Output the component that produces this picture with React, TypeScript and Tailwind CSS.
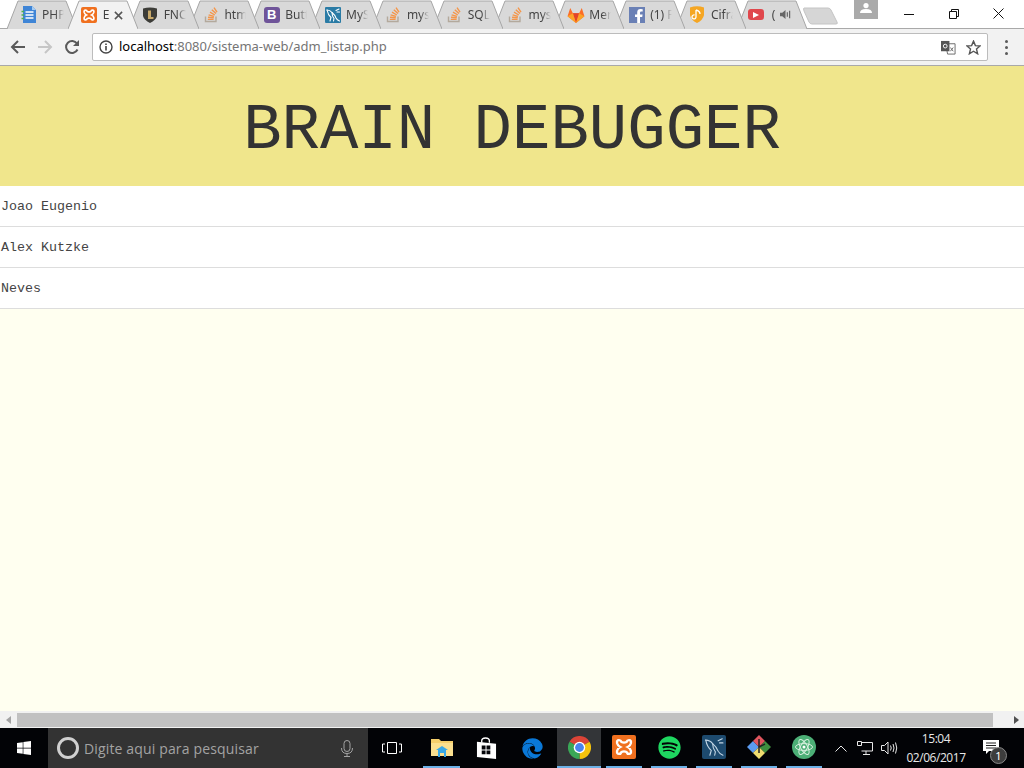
import React from "react";
import { FaSpotify, FaEdge, FaWindows } from "react-icons/fa";

const So = () => (
  <svg viewBox="0 0 16 17" className="w-4 h-[17px]">
    <path d="M2.5 10.5 V15.5 H13 V10.5" stroke="#b3a99c" strokeWidth="1.4" fill="none" />
    <path d="M4.8 13.4 H10.6 M5 11.2 L10.8 11.8 M5.6 8.8 L11 10.4 M7 6.2 L11.8 9 M8.8 3.8 L13 7.6 M11 1.6 L14 6.2" stroke="#f4964a" strokeWidth="1.4" />
  </svg>
);
const Xampp = ({ big }: { big?: boolean }) => (
  <span className={`flex items-center justify-center bg-[#f0701f] ${big ? "w-6 h-6 rounded-[2px]" : "w-4 h-4 rounded-[2px]"}`}>
    <svg viewBox="0 0 16 16" className={big ? "w-5 h-5" : "w-[14px] h-[14px]"}>
      <path d="M4 2.5 Q5.5 2.5 6 4 Q8 5 10 4 Q10.5 2.5 12 2.5 Q14 2.5 13.5 5 Q13 7 11 8 Q13 9 13.5 11 Q14 13.5 12 13.5 Q10.5 13.5 10 12 Q8 11 6 12 Q5.5 13.5 4 13.5 Q2 13.5 2.5 11 Q3 9 5 8 Q3 7 2.5 5 Q2 2.5 4 2.5Z" fill="none" stroke="#fff" strokeWidth="1.9" />
    </svg>
  </span>
);
const Gitlab = () => (
  <svg viewBox="0 0 20 18" className="w-[18px] h-4 shrink-0">
    <path d="M10 18 L0.5 10.5 L3.5 1 L6.5 7 H13.5 L16.5 1 L19.5 10.5Z" fill="#fc6d26" />
    <path d="M10 18 L6.5 7 H13.5Z" fill="#e24329" />
    <path d="M10 18 L0.5 10.5 L6.5 7Z" fill="#fca326" />
    <path d="M10 18 L19.5 10.5 L13.5 7Z" fill="#fca326" />
  </svg>
);
const Shield = () => (
  <svg viewBox="0 0 16 16" className="w-4 h-4">
    <path d="M1 1.5 Q8 -.5 15 1.5 V9 Q14 13 8 16 Q2 13 1 9Z" fill="#3d3d38" />
    <path d="M6 3.5 H9 V10 H11.5 V12 H6Z" fill="#c8a96a" />
  </svg>
);
const Doc = () => (
  <svg viewBox="0 0 16 17" className="w-4 h-[17px]">
    <path d="M2 0 H11 L15 4 V17 H2Z" fill="#3f85d6" />
    <path d="M11 0 L15 4 H11Z" fill="#a8cdf3" />
    <path d="M4.5 6 H12.5 M4.5 9 H12.5 M4.5 12 H12.5" stroke="#fff" strokeWidth="1.3" />
    <path d="M.5 5.5 H3 M.5 9 H3 M.5 12.5 H3" stroke="#4caf50" strokeWidth="1.6" />
  </svg>
);
const Boot = () => (
  <span className="w-4 h-4 rounded-[3px] bg-[#6f5499] text-white flex items-center justify-center text-[13px] leading-none font-bold font-['Liberation_Sans',sans-serif]">B</span>
);
const DolphinPath = ({ color, w }: { color: string; w: number }) => (
  <g fill="none" stroke={color} strokeWidth={w} strokeLinecap="round">
    <path d="M2 3 Q5 3 7 5.5 Q10 8 11 11 Q12 13 14.5 14" />
    <path d="M2 3 Q3 8 6 10.5 L5 14" />
    <path d="M7 5.5 Q7 9 9 11.5 L8.5 14" />
    <path d="M11 3.5 L14 2 M12 5 L14.5 5" />
  </g>
);
const Dolphin = () => (
  <span className="w-4 h-4 bg-[#2a7ba5] flex items-center justify-center rounded-[1px]">
    <svg viewBox="0 0 16 16" className="w-4 h-4"><DolphinPath color="#fff" w={1.1} /></svg>
  </span>
);
const Fb = () => (
  <svg viewBox="0 0 16 16" className="w-4 h-4">
    <rect width="16" height="16" fill="#6a80b5" />
    <path d="M11 16 V10 H13.2 L13.6 7.4 H11 V5.8 Q11 4.6 12.2 4.6 H13.7 V2.3 Q12.6 2.1 11.6 2.1 Q8.2 2.1 8.2 5.5 V7.4 H6 V10 H8.2 V16Z" fill="#fff" />
  </svg>
);
const Cifra = () => (
  <svg viewBox="0 0 16 17" className="w-4 h-[17px]">
    <path d="M1 1.5 Q8 -1 15 1.5 V9 Q14 14 8 17 Q2 14 1 9Z" fill="#f5a623" />
    <path d="M7 4 V11 A2 2 0 1 1 5.5 9 M7 4 Q11 5 11 8" stroke="#fff" strokeWidth="1.3" fill="none" />
  </svg>
);
const Yt = () => (
  <span className="w-[16px] h-[11px] bg-[#e0474c] rounded-[3px] flex items-center justify-center -translate-x-[2px]">
    <svg viewBox="0 0 6 6" className="w-[6px] h-[6px]"><path d="M0 0 L6 3 L0 6Z" fill="#fff" /></svg>
  </span>
);
const Speaker = ({ color }: { color: string }) => (
  <svg viewBox="0 0 12 12" className="w-[11px] h-[11px]">
    <path d="M0 4 H2.5 L6 1 V11 L2.5 8 H0Z" fill={color} />
    <path d="M8 3.5 V8.5 M10.5 2 V10" stroke={color} strokeWidth="1.3" />
  </svg>
);

const tabs: { t: string; icon: React.ReactNode; active?: boolean }[] = [
  { t: "PHP", icon: <Doc /> },
  { t: "E", icon: <Xampp />, active: true },
  { t: "FNC", icon: <Shield /> },
  { t: "htm", icon: <So /> },
  { t: "Butt", icon: <Boot /> },
  { t: "MyS", icon: <Dolphin /> },
  { t: "mys", icon: <So /> },
  { t: "SQL", icon: <So /> },
  { t: "mys", icon: <So /> },
  { t: "Mer", icon: <Gitlab /> },
  { t: "(1) F", icon: <Fb /> },
  { t: "Cifra", icon: <Cifra /> },
  { t: "(", icon: <Yt /> },
];

function Tab({ t, icon, active, z, i }: { t: string; icon: React.ReactNode; active?: boolean; z: number; i: number }) {
  return (
    <div className={`relative w-[70px] h-[29px] shrink-0 flex items-center pl-[13px] ${i === 0 ? "" : "ml-[-9.2px]"}`} style={{ zIndex: z }}>
      <svg viewBox="0 0 70 29" className="absolute inset-0 w-[70px] h-[29px]">
        <path d="M0 29 L11 1 H59 L70 29Z" fill={active ? "#f2f2f2" : "#d9d9d9"} />
        <path d="M0 29 L11 1 H59 L70 29" fill="none" stroke="#a6a6a6" strokeWidth="1" />
      </svg>
      <span className="relative w-[17px] flex justify-center shrink-0">{icon}</span>
      <span className="relative ml-[5px] w-[22px] overflow-hidden whitespace-nowrap text-[12px] text-[#444] [mask-image:linear-gradient(to_right,black_60%,transparent)]">
        {t}
      </span>
      {active && (
        <svg viewBox="0 0 10 10" className="absolute left-[46px] top-[11px] w-[9px] h-[9px]">
          <path d="M1 1 L9 9 M9 1 L1 9" stroke="#555" strokeWidth="1.7" />
        </svg>
      )}
      {t === "(" && (
        <span className="absolute left-[43px] top-[9px]"><Speaker color="#666" /></span>
      )}
    </div>
  );
}

const Chrome = () => (
  <svg viewBox="0 0 24 24" className="w-[23px] h-[23px]">
    <path d="M12 12 L1.6 6 A12 12 0 0 1 22.4 6Z" fill="#db4437" />
    <path d="M12 12 L22.4 6 A12 12 0 0 1 12 24Z" fill="#f4c20d" />
    <path d="M12 12 L12 24 A12 12 0 0 1 1.6 6Z" fill="#3aa757" />
    <circle cx="12" cy="12" r="6" fill="#fff" />
    <circle cx="12" cy="12" r="4.6" fill="#4a84ee" />
  </svg>
);
const Explorer = () => (
  <svg viewBox="0 0 22 19" className="w-[22px] h-[19px]">
    <path d="M0 1 H8 L10 3 H22 V18 H0Z" fill="#f5cf6b" />
    <path d="M0 5 H22 V18 H0Z" fill="#fbe08f" />
    <path d="M7 12 H15 V19 H13 V15 H9 V19 H7Z" fill="#3aa9e6" />
    <path d="M5 12 L11 8 L17 12Z" fill="#3aa9e6" />
  </svg>
);
const Store = () => (
  <svg viewBox="0 0 22 23" className="w-[21px] h-[22px]">
    <path d="M6 6 V4 Q6 1 10 1 Q14 1 14 4 V6" stroke="#fff" strokeWidth="1.4" fill="none" />
    <path d="M1 5 L21 7 V23 L1 21Z" fill="#fff" />
    <path d="M6 9 H10 V13 H6Z M11 9 H15 V13 H11Z M6 14 H10 V18 H6Z M11 14 H15 V18 H11Z" fill="#05060a" />
  </svg>
);
const Workbench = () => (
  <span className="w-6 h-6 bg-[#1d4a6e] rounded-[2px] flex items-center justify-center">
    <svg viewBox="0 0 16 16" className="w-[22px] h-[22px]"><DolphinPath color="#c3d6e5" w={0.8} /></svg>
  </span>
);
const Kraken = () => (
  <svg viewBox="0 0 24 24" className="w-6 h-6">
    <path d="M0 12 L6 6 L12 12 L6 18Z" fill="#5b9bf0" />
    <path d="M12 12 L18 6 L24 12 L18 18Z" fill="#3f8f3f" />
    <path d="M6 6 L12 0 L18 6 L12 12Z" fill="#e0555e" />
    <path d="M6 18 L12 12 L18 18 L12 24Z" fill="#f0dd70" />
    <path d="M12 4 V18 M12 12 L18 9" stroke="#222" strokeWidth="1.5" />
  </svg>
);
const Atom = () => (
  <svg viewBox="0 0 24 24" className="w-6 h-6">
    <circle cx="12" cy="12" r="12" fill="#4caf76" />
    <g stroke="#d8f0df" strokeWidth="1" fill="none">
      <ellipse cx="12" cy="12" rx="8.5" ry="3.4" />
      <ellipse cx="12" cy="12" rx="8.5" ry="3.4" transform="rotate(60 12 12)" />
      <ellipse cx="12" cy="12" rx="8.5" ry="3.4" transform="rotate(120 12 12)" />
    </g>
    <circle cx="12" cy="12" r="1.5" fill="#fff" />
  </svg>
);

const bar: { icon: React.ReactNode; active?: boolean; open?: boolean; cls: string }[] = [
  { icon: <Explorer />, open: true, cls: "w-[37px] ml-[7px]" },
  { icon: <Store />, cls: "w-[37px] ml-[8px]" },
  { icon: <FaEdge className="w-[21px] h-[21px] text-[#0a78d7]" />, cls: "w-[37px] ml-[9px]" },
  { icon: <Chrome />, open: true, active: true, cls: "w-[44px] ml-[6px]" },
  { icon: <Xampp big />, open: true, cls: "w-[36px] ml-[5px]" },
  { icon: <FaSpotify className="w-[23px] h-[23px] text-[#1ed760]" />, open: true, cls: "w-[36px] ml-[9px]" },
  { icon: <Workbench />, open: true, cls: "w-[36px] ml-[9px]" },
  { icon: <Kraken />, open: true, cls: "w-[36px] ml-[9px]" },
  { icon: <Atom />, open: true, cls: "w-[36px] ml-[9px]" },
];

export default function App() {
  return (
    <div className="w-[1024px] h-[768px] overflow-hidden flex flex-col bg-[#fffff0] font-['Noto_Sans','Open_Sans',sans-serif]">
      {/* tab strip */}
      <div className="h-[29px] shrink-0 flex bg-white border-b border-[#a9a9a9]">
        <div className="flex pl-[7px] items-start">
          {tabs.map((x, i) => (
            <Tab key={i} i={i} t={x.t} icon={x.icon} active={x.active} z={x.active ? 50 : 30 - i} />
          ))}
          <svg viewBox="0 0 36 18" className="w-[36px] h-[18px] mt-[7px] ml-[-4px] shrink-0">
            <path d="M1 1 H25 Q27 1 28 3 L34 15 Q35 17 33 17 H9 Q7 17 6 15 L1 4Q0 1 1 1Z" fill="#d6d6d6" stroke="#c4c4c4" />
          </svg>
        </div>
        <div className="flex-1" />
        <div className="flex h-[28px] items-start pr-[3px]">
          <div className="w-6 h-[19px] bg-[#aaaaaa] flex items-start justify-center pt-[3px] mr-[8px]">
            <svg viewBox="0 0 12 10" className="w-3 h-[10px]">
              <circle cx="6" cy="2.6" r="2.6" fill="#fff" />
              <path d="M0 10 Q0 6 6 6 Q12 6 12 10Z" fill="#fff" />
            </svg>
          </div>
          <div className="w-[45px] h-[27px] flex items-center justify-center">
            <svg viewBox="0 0 10 10" className="w-[10px] h-[10px]"><path d="M0 5.5 H10" stroke="#111" /></svg>
          </div>
          <div className="w-[45px] h-[27px] flex items-center justify-center">
            <svg viewBox="0 0 10 10" className="w-[10px] h-[10px]">
              <path d="M.5 2.5 H7.5 V9.5 H.5Z M2.5 2.5 V.5 H9.5 V7.5 H7.5" stroke="#111" fill="none" />
            </svg>
          </div>
          <div className="w-[45px] h-[27px] flex items-center justify-center">
            <svg viewBox="0 0 11 11" className="w-[11px] h-[11px]"><path d="M.5 .5 L10.5 10.5 M10.5 .5 L.5 10.5" stroke="#111" /></svg>
          </div>
        </div>
      </div>

      {/* toolbar */}
      <div className="h-[37px] shrink-0 bg-[#f2f2f2] border-b border-[#a9a9a9] flex items-center">
        <div className="w-[92px] flex items-center pl-[10px] gap-[11px] shrink-0">
          <svg viewBox="0 0 16 16" className="w-[16px] h-[16px]"><path d="M15 8 H2 M8 2 L2 8 L8 14" stroke="#5a5a5a" strokeWidth="2" fill="none" /></svg>
          <svg viewBox="0 0 16 16" className="w-[16px] h-[16px]"><path d="M1 8 H14 M8 2 L14 8 L8 14" stroke="#c6c6c6" strokeWidth="2" fill="none" /></svg>
          <svg viewBox="0 0 16 16" className="w-[16px] h-[16px]"><path d="M13.5 10.5 A6 6 0 1 1 13 4.5" stroke="#5a5a5a" strokeWidth="2" fill="none" /><path d="M15 1 V7 H9Z" fill="#5a5a5a" /></svg>
        </div>
        <div className="w-[896px] h-[28px] bg-white border border-[#bcbcbc] rounded-[2px] flex items-center pl-[6px] pr-[6px] shrink-0">
          <svg viewBox="0 0 14 14" className="w-[14px] h-[14px] shrink-0">
            <circle cx="7" cy="7" r="6" stroke="#444" strokeWidth="1.4" fill="none" />
            <path d="M7 6 V10.5 M7 3.4 V5" stroke="#444" strokeWidth="1.6" />
          </svg>
          <span className="ml-[6px] text-[13px] whitespace-nowrap text-[#757575] tracking-[-0.02px]"><span className="text-black">localhost</span>:8080/sistema-web/adm_listap.php</span>
          <div className="flex-1" />
          <svg viewBox="0 0 16 16" className="w-[15px] h-[15px]">
            <path d="M5 4 H15 V15 H7Z" fill="#fff" stroke="#666" />
            <path d="M0 1 H9 V12 H0Z" fill="#555" />
            <circle cx="4.5" cy="6.5" r="2" stroke="#fff" fill="none" />
            <path d="M10 8 L13 12 M13 8 L10 12" stroke="#666" />
          </svg>
          <svg viewBox="0 0 16 16" className="w-[15px] h-[15px] ml-[10px]">
            <path d="M8 1.2 L10 6 L15 6.4 L11.2 9.7 L12.4 14.7 L8 12 L3.6 14.7 L4.8 9.7 L1 6.4 L6 6Z" fill="none" stroke="#555" strokeWidth="1.5" />
          </svg>
        </div>
        <div className="w-[36px] flex flex-col items-center gap-[3px] shrink-0">
          <span className="w-[3px] h-[3px] rounded-full bg-[#5a5a5a]" />
          <span className="w-[3px] h-[3px] rounded-full bg-[#5a5a5a]" />
          <span className="w-[3px] h-[3px] rounded-full bg-[#5a5a5a]" />
        </div>
      </div>

      {/* page */}
      <div className="flex-1 min-h-0 font-['Liberation_Mono',monospace] text-[#333]">
        <div className="h-[120px] bg-[#f0e68c] flex items-center justify-center pt-[10px] text-[64px]">BRAIN DEBUGGER</div>
        {["Joao Eugenio", "Alex Kutzke", "Neves"].map((n) => (
          <div key={n} className="h-[41px] bg-white border-b border-[#dddddd] flex items-center pl-[1px] pt-[2px] text-[13.333px] text-[#444]">{n}</div>
        ))}
      </div>

      {/* scrollbar */}
      <div className="h-[17px] shrink-0 bg-[#f1f1f1] flex items-center">
        <div className="w-[17px] flex justify-center">
          <svg viewBox="0 0 5 8" className="w-[5px] h-2"><path d="M5 0 L0 4 L5 8Z" fill="#a3a3a3" /></svg>
        </div>
        <div className="w-[976px] h-[14px] bg-[#c1c1c1]" />
        <div className="flex-1 flex justify-center pl-[16px]">
          <svg viewBox="0 0 5 8" className="w-[5px] h-2"><path d="M0 0 L5 4 L0 8Z" fill="#505050" /></svg>
        </div>
      </div>

      {/* taskbar */}
      <div className="h-[40px] shrink-0 bg-[#020306] flex items-stretch text-white">
        <div className="w-[48px] flex items-center justify-center">
          <FaWindows className="w-4 h-4" />
        </div>
        <div className="w-[320px] bg-[#333333] flex items-center pl-[9px] pr-[15px]">
          <span className="w-[22px] h-[22px] rounded-full border-[3px] border-[#d0d0d0]" />
          <span className="ml-[5px] text-[14px] text-[#a3a3a3] tracking-[0.15px] font-['Open_Sans',sans-serif]">Digite aqui para pesquisar</span>
          <div className="flex-1" />
          <svg viewBox="0 0 12 17" className="w-3 h-[17px]">
            <rect x="3" y=".5" width="6" height="11" rx="3" stroke="#a3a3a3" fill="none" />
            <path d="M.5 8 Q.5 13.5 6 13.5 Q11.5 13.5 11.5 8 M6 13.5 V16.5 M3 16.5 H9" stroke="#a3a3a3" fill="none" />
          </svg>
        </div>
        <div className="w-[48px] flex items-center justify-center">
          <svg viewBox="0 0 20 14" className="w-5 h-[14px]">
            <path d="M5.5 1.5 H14.5 V12.5 H5.5Z M3 3 H.5 V11 H3 M17 3 H19.5 V11 H17" stroke="#fff" fill="none" />
          </svg>
        </div>
        {bar.map((b, i) => (
          <div key={i} className={`flex items-center justify-center ${b.cls} ${b.active ? "bg-[#333538]" : ""} ${b.open ? "border-b-2 border-[#6cb0e6]" : ""}`}>
            {b.icon}
          </div>
        ))}
        <div className="flex-1" />
        <div className="flex items-center">
          <svg viewBox="0 0 12 7" className="w-3 h-[7px] mr-[10px]"><path d="M.5 6.5 L6 1 L11.5 6.5" stroke="#e8e8e8" fill="none" /></svg>
          <svg viewBox="0 0 16 14" className="w-4 h-[14px] mr-[8px]">
            <path d="M4.5 1.5 H15.5 V10 H4.5 M9 10 V13 M6 13.5 H13 M.5 .5 H4.5 V4.5 H.5Z" stroke="#e8e8e8" fill="none" />
          </svg>
          <svg viewBox="0 0 17 14" className="w-[17px] h-[14px]">
            <path d="M.5 4.5 H3.5 L7 1 V13 L3.5 9.5 H.5Z M9.5 4.5 Q11 7 9.5 9.5 M12 3 Q14 7 12 11 M14.5 1.5 Q17 7 14.5 12.5" stroke="#e8e8e8" fill="none" />
          </svg>
          <div className="w-[60px] ml-[8px] flex flex-col items-center text-[12px] leading-[19px] text-[#e8e8e8] tracking-[-0.45px] font-['Open_Sans',sans-serif] -mt-[1px]">
            <span>15:04</span>
            <span className="whitespace-nowrap">02/06/2017</span>
          </div>
          <div className="relative w-[58px] h-[40px] flex items-center pl-[17px]">
            <svg viewBox="0 0 16 14" className="w-4 h-[14px] mb-[3px]">
              <path d="M0 0 H16 V11 H6 L3 14 V11 H0Z" fill="#fff" />
              <path d="M3 3 H13 M3 5.5 H13 M3 8 H13" stroke="#222" />
            </svg>
            <span className="absolute left-[24px] top-[19px] w-[17px] h-[17px] rounded-full bg-[#3d3d3d] border border-[#888] text-[11px] leading-[15px] text-center text-white">1</span>
          </div>
        </div>
      </div>
    </div>
  );
}
